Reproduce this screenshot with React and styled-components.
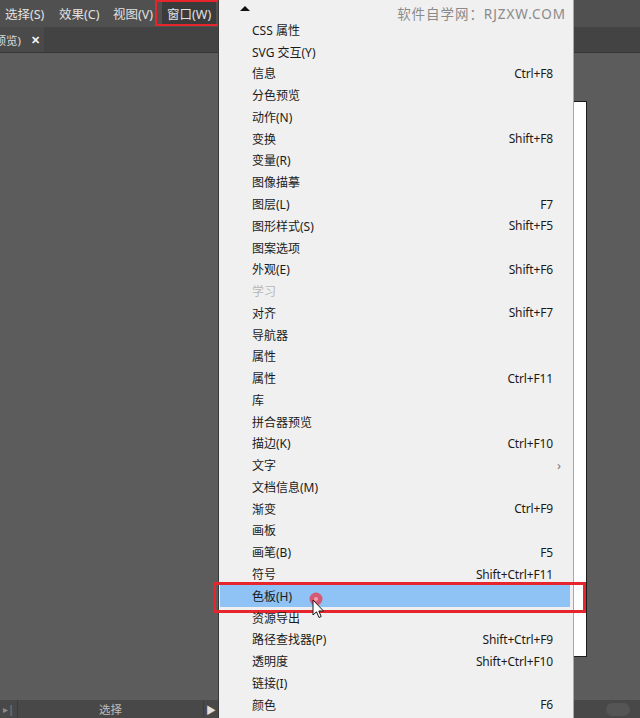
import React from 'react';
import styled, { createGlobalStyle } from 'styled-components';

const Global = createGlobalStyle`
  html, body { margin: 0; padding: 0; background: #5c5c5c; }
  body {
    width: 640px; height: 718px; overflow: hidden;
    font-family: "Noto Sans", "Noto Sans CJK SC", sans-serif;
  }
  #root { height: 718px; }
`;

const Screen = styled.div`
  position: relative;
  width: 640px;
  height: 718px;
  display: flex;
  flex-direction: column;
  overflow: hidden;
`;

const MenuBar = styled.div`
  height: 27px;
  flex: none;
  background: #505050;
  display: flex;
  align-items: stretch;
`;

const MenuItem = styled.div`
  position: relative;
  width: 54px;
  box-sizing: border-box;
  margin: 2px 0 3px;
  padding-left: 5px;
  display: flex;
  align-items: center;
  font-size: 12.5px;
  color: #e2e2e2;
  white-space: nowrap;
  background: ${p => (p.$active ? '#3b3b3b' : 'transparent')};
`;

const RedFrame = styled.div`
  position: absolute;
  left: ${p => p.$l}px;
  right: ${p => p.$r}px;
  top: ${p => p.$t}px;
  bottom: ${p => p.$b}px;
  border: ${p => p.$w}px solid #e6262c;
  pointer-events: none;
`;

const TabBar = styled.div`
  height: 25px;
  flex: none;
  background: #434343;
  border-bottom: 1px solid #363636;
  display: flex;
`;

const Tab = styled.div`
  width: 44px;
  background: #4a4a4a;
  display: flex;
  justify-content: flex-end;
  align-items: center;
  gap: 10px;
  padding-right: 4px;
  box-sizing: border-box;
  overflow: hidden;
  white-space: nowrap;
  font-size: 11.5px;
  color: #dcdcdc;
`;

const Close = styled.span`
  font-size: 11px;
  font-weight: bold;
  color: #f4f4f4;
`;

const Canvas = styled.div`
  flex: 1;
  background: #5c5c5c;
  display: flex;
  justify-content: flex-end;
  padding: 48px 53px 43px 0;
`;

const Artboard = styled.div`
  width: 340px;
  background: #ffffff;
  border: 1px solid #1c1c1c;
`;

const StatusBar = styled.div`
  height: 18px;
  flex: none;
  background: #484848;
  display: flex;
  align-items: center;
`;

const StatusLeft = styled.div`
  width: 218px;
  height: 100%;
  display: flex;
  align-items: center;
  color: #8c8c8c;
  font-size: 10px;
`;

const StatusCell = styled.div`
  width: ${p => p.$w}px;
  height: 100%;
  display: flex;
  align-items: center;
  justify-content: center;
  border-right: ${p => (p.$sep ? '1px solid #3c3c3c' : 'none')};
  color: ${p => p.$c || '#8c8c8c'};
`;

const StatusLabel = styled.div`
  flex: 1;
  text-align: center;
  font-size: 11.5px;
  color: #bdbdbd;
  border-right: 1px solid #3c3c3c;
`;

const Oval = styled.div`
  margin-left: auto;
  margin-right: 10px;
  width: 24px;
  height: 13px;
  border-radius: 7px;
  background: #555555;
`;

const Dropdown = styled.div`
  position: absolute;
  left: 218px;
  top: 0;
  width: 356px;
  height: 718px;
  box-sizing: border-box;
  background: #f0f0f0;
  border-left: 1px solid #393939;
  border-right: 1px solid #a8a8a8;
  display: flex;
  flex-direction: column;
`;

const Header = styled.div`
  height: 19px;
  flex: none;
  display: flex;
  justify-content: space-between;
  align-items: flex-start;
  padding: 0 7px 0 21px;
`;

const UpArrow = styled.div`
  margin-top: 6px;
  width: 0;
  height: 0;
  border-left: 5px solid transparent;
  border-right: 5px solid transparent;
  border-bottom: 5px solid #111;
`;

const Watermark = styled.div`
  margin-top: 5px;
  line-height: 18px;
  font-size: 13.5px;
  letter-spacing: 0.95px;
  color: #8a8a8a;
  white-space: nowrap;
`;

const Item = styled.div`
  position: relative;
  height: 21.77px;
  flex: none;
  margin: 0 3px 0 1px;
  padding: 0 17px 0 32px;
  display: flex;
  align-items: center;
  justify-content: space-between;
  font-size: 12px;
  color: ${p => (p.$disabled ? '#b8b8b8' : '#1b1b1b')};
  background: ${p => (p.$hl ? '#8fc3f5' : 'transparent')};
  white-space: nowrap;
`;

const Shortcut = styled.span`
  color: #1b1b1b;
  letter-spacing: -0.15px;
`;

const Chevron = styled.span`
  margin-right: -8px;
  color: #7a7a7a;
  font-size: 13px;
`;

const CursorMark = styled.svg`
  position: absolute;
  left: 86px;
  top: 6px;
  width: 22px;
  height: 28px;
  overflow: visible;
  pointer-events: none;
`;

const menus = [
  { t: '选择(S)' },
  { t: '效果(C)' },
  { t: '视图(V)' },
  { t: '窗口(W)', active: true },
];

const items = [
  ['CSS 属性'],
  ['SVG 交互(Y)'],
  ['信息', 'Ctrl+F8'],
  ['分色预览'],
  ['动作(N)'],
  ['变换', 'Shift+F8'],
  ['变量(R)'],
  ['图像描摹'],
  ['图层(L)', 'F7'],
  ['图形样式(S)', 'Shift+F5'],
  ['图案选项'],
  ['外观(E)', 'Shift+F6'],
  ['学习', null, 'disabled'],
  ['对齐', 'Shift+F7'],
  ['导航器'],
  ['属性'],
  ['属性', 'Ctrl+F11'],
  ['库'],
  ['拼合器预览'],
  ['描边(K)', 'Ctrl+F10'],
  ['文字', null, 'sub'],
  ['文档信息(M)'],
  ['渐变', 'Ctrl+F9'],
  ['画板'],
  ['画笔(B)', 'F5'],
  ['符号', 'Shift+Ctrl+F11'],
  ['色板(H)', null, 'hl'],
  ['资源导出'],
  ['路径查找器(P)', 'Shift+Ctrl+F9'],
  ['透明度', 'Shift+Ctrl+F10'],
  ['链接(I)'],
  ['颜色', 'F6'],
];

function Cursor() {
  return (
    <CursorMark viewBox="0 0 22 28">
      <circle cx="10" cy="8" r="6.5" fill="#e0465e" fillOpacity="0.85" />
      <circle cx="10" cy="8" r="2" fill="#f3a0ac" />
      <path
        d="M7 9 L7 24 L10.5 20.8 L13 26.5 L15.2 25.5 L12.8 20 L17.5 20 Z"
        fill="#ffffff"
        stroke="#1a1a1a"
        strokeWidth="1"
        strokeLinejoin="round"
      />
    </CursorMark>
  );
}

export default function App() {
  return (
    <>
      <Global />
      <Screen>
        <MenuBar>
          {menus.map(m => (
            <MenuItem key={m.t} $active={m.active}>
              {m.t}
              {m.active && <RedFrame $l={-7} $r={-4} $t={-2} $b={-2} $w={2} />}
            </MenuItem>
          ))}
        </MenuBar>
        <TabBar>
          <Tab>
            <span>图预览)</span>
            <Close>✕</Close>
          </Tab>
        </TabBar>
        <Canvas>
          <Artboard />
        </Canvas>
        <StatusBar>
          <StatusLeft>
            <StatusCell $w={17} $sep>▸|</StatusCell>
            <StatusLabel>选择</StatusLabel>
            <StatusCell $w={14} $c="#e0e0e0">▶</StatusCell>
          </StatusLeft>
          <Oval />
        </StatusBar>

        <Dropdown>
          <Header>
            <UpArrow />
            <Watermark>软件自学网：RJZXW.COM</Watermark>
          </Header>
          {items.map(([label, sc, flag], i) => (
            <Item key={i} $hl={flag === 'hl'} $disabled={flag === 'disabled'}>
              <span>{label}</span>
              {sc && <Shortcut>{sc}</Shortcut>}
              {flag === 'sub' && <Chevron>›</Chevron>}
              {flag === 'hl' && (
                <>
                  <RedFrame $l={-7} $r={-16} $t={-3} $b={-6} $w={3} />
                  <Cursor />
                </>
              )}
            </Item>
          ))}
        </Dropdown>
      </Screen>
    </>
  );
}
